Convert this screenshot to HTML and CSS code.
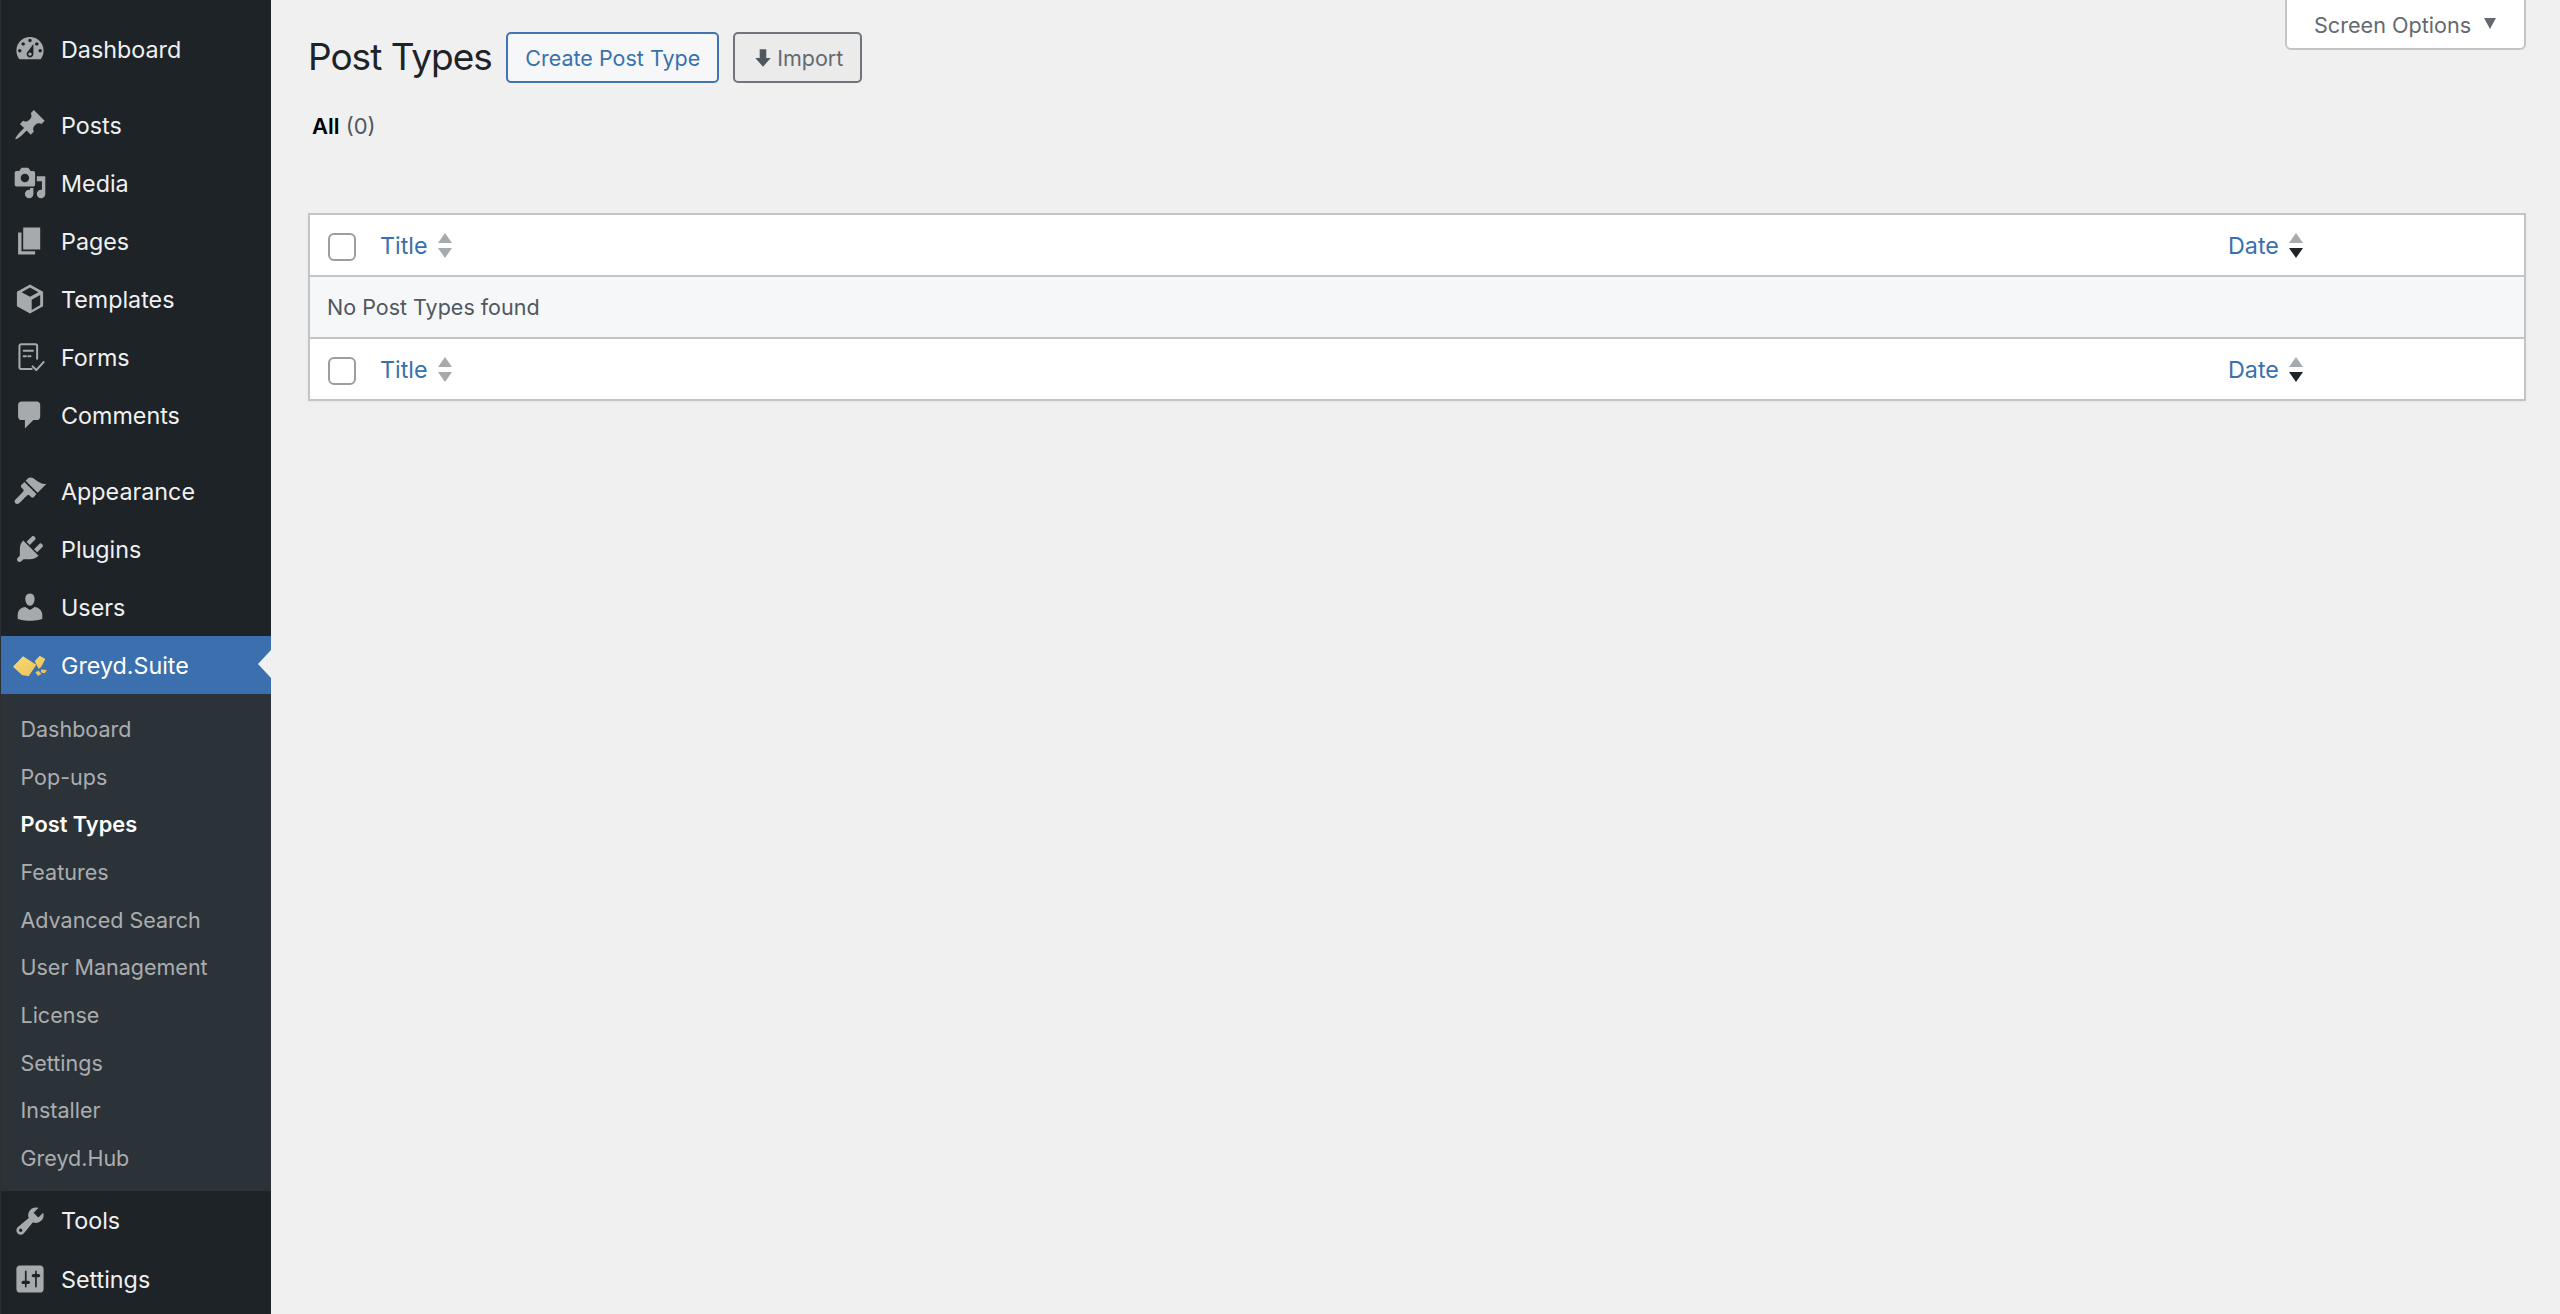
FILE: index.html
```html
<!DOCTYPE html>
<html lang="en">
<head>
<meta charset="utf-8">
<title>Post Types</title>
<link rel="stylesheet" href="styles.css">
</head>
<body>
<div class="app">
  <nav class="sidebar">
    <ul class="menu">
      <li class="item"><svg class="icon" viewBox="0 0 20 20"><path fill-rule="evenodd" d="M3.76 16h12.48c1.1-1.37 1.76-3.11 1.76-5 0-4.42-3.58-8-8-8s-8 3.58-8 8c0 1.89.66 3.63 1.76 5zM10 4c.55 0 1 .45 1 1s-.45 1-1 1-1-.45-1-1 .45-1 1-1zM6 6c.55 0 1 .45 1 1s-.45 1-1 1-1-.45-1-1 .45-1 1-1zm8 0c.55 0 1 .45 1 1s-.45 1-1 1-1-.45-1-1 .45-1 1-1zm-5.37 5.55L12 7v6c0 1.1-.9 2-2 2s-2-.9-2-2c0-.57.24-1.08.63-1.45zM4 10c.55 0 1 .45 1 1s-.45 1-1 1-1-.45-1-1 .45-1 1-1zm12 0c.55 0 1 .45 1 1s-.45 1-1 1-1-.45-1-1 .45-1 1-1zm-5 3c0-.55-.45-1-1-1s-1 .45-1 1 .45 1 1 1 1-.45 1-1z"/></svg>Dashboard</li>
      <li class="item gap"><svg class="icon" viewBox="0 0 20 20"><path d="M10.44 3.02l1.82-1.82 6.36 6.35-1.83 1.82c-1.05-.68-2.48-.57-3.41.36l-.75.75c-.92.93-1.04 2.35-.35 3.41l-1.83 1.82-2.41-2.41-2.8 2.79c-.42.42-3.38 2.71-3.8 2.29s1.86-3.39 2.28-3.81l2.79-2.79L4.1 9.36l1.83-1.82c1.05.69 2.48.57 3.4-.36l.75-.75c.93-.92 1.05-2.35.36-3.41z"/></svg>Posts</li>
      <li class="item"><svg class="icon" viewBox="0 0 20 20"><path fill-rule="evenodd" d="M13 11V4c0-.55-.45-1-1-1h-1.67L9 1H5L3.67 3H2c-.55 0-1 .45-1 1v7c0 .55.45 1 1 1h10c.55 0 1-.45 1-1zM7 4.5c1.38 0 2.5 1.12 2.5 2.5S8.38 9.5 7 9.5 4.5 8.38 4.5 7 5.62 4.5 7 4.5zM14 6h5v10.5c0 1.38-1.12 2.5-2.5 2.5S14 17.88 14 16.5s1.12-2.5 2.5-2.5c.17 0 .34.02.5.05V9h-3V6zm-4 8.05V13h2v3.5c0 1.38-1.12 2.5-2.5 2.5S7 17.88 7 16.5 8.12 14 9.5 14c.17 0 .34.02.5.05z"/></svg>Media</li>
      <li class="item"><svg class="icon" viewBox="0 0 20 20"><path d="M6 15V2h10v13H6zm-1 1h8v2H3V5h2v11z"/></svg>Pages</li>
      <li class="item"><svg class="icon" viewBox="0 0 20 20"><path fill-rule="evenodd" d="M10 1.5l7.7 4.3v8.4L10 18.5l-7.700-4.300V5.800zM10 3.300L5.100 6 10 8.700 14.900 6zM11 10.400v6l5-2.800V7.600z"/></svg>Templates</li>
      <li class="item"><svg class="icon" viewBox="0 0 20 20"><path class="line" d="M11 17H4.800a1 1 0 0 1-1-1V3.500a1 1 0 0 1 1-1h8.400a1 1 0 0 1 1 1V11M6.300 6.300h5.400M6.300 9.500h1.300M9 9.500h1.300"/><path class="line" d="M11.500 15.500l2.200 2.200 4.300-4.700"/></svg>Forms</li>
      <li class="item"><svg class="icon" viewBox="0 0 20 20"><path d="M5 2h9c1.100 0 2 .9 2 2v7c0 1.100-.9 2-2 2h-2l-5 5v-5H5c-1.100 0-2-.9-2-2V4c0-1.100.9-2 2-2z"/></svg>Comments</li>
      <li class="item gap"><svg class="icon" viewBox="0 0 20 20"><path d="M14.480 11.060L7.410 3.990l1.500-1.500c.5-.56 2.300-.47 3.510.32 1.210.8 1.430 1.280 2.910 2.100 1.180.64 2.450 1.260 4.450.85zm-.71.71L6.700 4.700 4.930 6.470c-.39.39-.39 1.020 0 1.410l1.060 1.060c.39.39.39 1.030 0 1.420-.6.6-1.100 1.300-2 2.100l-2.400 2.400c-.8.8-.8 1.800-.2 2.400s1.600.6 2.400-.2l2.400-2.400c.8-.9 1.500-1.400 2.100-2 .39-.39 1.030-.39 1.420 0l1.060 1.060c.39.39 1.020.39 1.410 0z"/></svg>Appearance</li>
      <li class="item"><svg class="icon" viewBox="0 0 20 20"><path d="M13.110 4.360L9.870 7.600 8 5.730l3.240-3.240c.35-.34 1.050-.2 1.560.32.52.51.66 1.210.31 1.550zm-8 1.770l.91-1.120 9.010 9.010-1.190.84c-.71.71-2.630 1.160-3.820 1.160H6.140L4.900 17.260c-.59.59-1.540.59-2.120 0-.59-.58-.59-1.530 0-2.120l1.240-1.240v-3.880c0-1.130.4-3.190 1.090-3.890zm7.260 3.970l3.240-3.240c.34-.35 1.040-.21 1.550.31.52.51.66 1.210.31 1.550l-3.240 3.250z"/></svg>Plugins</li>
      <li class="item"><svg class="icon" viewBox="0 0 20 20"><path d="M10 9.250c-2.270 0-2.730-3.440-2.730-3.440C7 4.020 7.820 2 9.970 2c2.160 0 2.980 2.020 2.710 3.810 0 0-.41 3.440-2.680 3.440zm0 2.570L12.720 10c2.390 0 4.520 2.330 4.520 4.530v2.490s-3.650 1.130-7.240 1.130c-3.650 0-7.240-1.130-7.240-1.130v-2.490c0-2.250 1.940-4.480 4.470-4.480z"/></svg>Users</li>
      <li class="item active"><svg class="icon" viewBox="0 0 34 34"><defs><linearGradient id="gold" x1="0" y1="0" x2="1" y2="1"><stop offset="0" stop-color="#f7dc76"/><stop offset="1" stop-color="#eebd55"/></linearGradient></defs><path fill="url(#gold)" d="M0 18.700L10 8.300 23.300 16.700 15.700 28.300 9 27zM21.700 13.300L26.700 7.700 32.300 11 28.300 18.700 25.700 21zM28 21.500l6 .5-2.300 3.300-3.700-.8zM22.300 24.300l3.400-1.600 2.600 3.300-3.300 2z"/></svg>Greyd.Suite</li>
    </ul>
    <ul class="submenu">
      <li class="subitem">Dashboard</li>
      <li class="subitem">Pop-ups</li>
      <li class="subitem current">Post Types</li>
      <li class="subitem">Features</li>
      <li class="subitem">Advanced Search</li>
      <li class="subitem">User Management</li>
      <li class="subitem">License</li>
      <li class="subitem">Settings</li>
      <li class="subitem">Installer</li>
      <li class="subitem">Greyd.Hub</li>
    </ul>
    <ul class="menu">
      <li class="item"><svg class="icon" viewBox="0 0 20 20"><path fill-rule="evenodd" d="M16.680 9.770c-1.340 1.340-3.300 1.670-4.950.99l-5.410 6.520c-.99.99-2.590.99-3.580 0s-.99-2.590 0-3.570l6.520-5.420c-.68-1.650-.35-3.610.99-4.950 1.280-1.280 3.120-1.620 4.720-1.060l-2.890 2.890 2.820 2.820 2.860-2.870c.53 1.580.18 3.390-1.080 4.670zM3.810 16.210c.4.39 1.040.39 1.430 0 .4-.4.4-1.040 0-1.430-.39-.4-1.030-.4-1.430 0-.39.39-.39 1.030 0 1.430z"/></svg>Tools</li>
      <li class="item"><svg class="icon" viewBox="0 0 20 20"><path fill-rule="evenodd" d="M18 16V4c0-1.100-.9-2-2-2H4c-1.100 0-2 .9-2 2v12c0 1.100.9 2 2 2h12c1.100 0 2-.9 2-2zM8 11h1c.55 0 1 .45 1 1s-.45 1-1 1H8v1.500c0 .28-.22.5-.5.5s-.5-.22-.5-.5V13H6c-.55 0-1-.45-1-1s.45-1 1-1h1V5.500c0-.28.22-.5.5-.5s.5.22.5.5V11zm5-2h-1c-.55 0-1-.45-1-1s.45-1 1-1h1V5.500c0-.28.22-.5.5-.5s.5.22.5.5V7h1c.55 0 1 .45 1 1s-.45 1-1 1h-1v5.500c0 .28-.22.5-.5.5s-.5-.22-.5-.5V9z"/></svg>Settings</li>
    </ul>
  </nav>
  <main class="content">
    <header class="page-head">
      <h1 class="title">Post Types</h1>
      <a class="btn btn-primary">Create Post Type</a>
      <a class="btn btn-muted"><svg class="btn-icon" viewBox="0 0 20 20"><path d="M7 2h6v8h4l-7 8-7-8h4z"/></svg>Import</a>
      <button class="screen-options">Screen Options<span class="caret"></span></button>
    </header>
    <p class="views"><strong>All</strong> <span>(0)</span></p>
    <table class="list">
      <thead>
        <tr>
          <th class="col-check"><span class="check"></span></th>
          <th class="col-title"><a class="sort">Title<span class="arrows"><i class="up"></i><i class="down"></i></span></a></th>
          <th class="col-date"><a class="sort">Date<span class="arrows"><i class="up"></i><i class="down dark"></i></span></a></th>
        </tr>
      </thead>
      <tbody>
        <tr><td class="empty" colspan="3">No Post Types found</td></tr>
      </tbody>
      <tfoot>
        <tr>
          <th class="col-check"><span class="check"></span></th>
          <th class="col-title"><a class="sort">Title<span class="arrows"><i class="up"></i><i class="down"></i></span></a></th>
          <th class="col-date"><a class="sort">Date<span class="arrows"><i class="up"></i><i class="down dark"></i></span></a></th>
        </tr>
      </tfoot>
    </table>
  </main>
</div>
</body>
</html>
```
FILE: styles.css
```css
* { box-sizing: border-box; }
html, body { margin: 0; height: 100%; overflow: hidden; }
body { font-family: Inter, "Liberation Sans", sans-serif; background: #f0f0f1; color: #3c434a; }
ul { list-style: none; margin: 0; padding: 0; }
.app { display: flex; height: 1314px; }

.sidebar { width: 271px; flex: none; background: #1d2327; padding-top: 20px; border-left: 1px solid #2a2f34; }
.item { position: relative; display: flex; align-items: center; gap: 14px; height: 58px; padding-left: 12px; font-size: 23.300px; color: #f0f0f1; white-space: nowrap; }
.item.gap { margin-top: 18px; }
.icon { width: 34px; height: 34px; flex: none; fill: #a7aaad; }
.line { fill: none; stroke: #a7aaad; stroke-width: 1.200; stroke-linecap: round; stroke-linejoin: round; }
.active { background: #3b6fad; color: #fff; margin-top: 0; }
.active::after { content: ""; position: absolute; right: 0; top: 14px; border: 14px solid transparent; border-left: 0; border-right: 13px solid #f0f0f1; }
.submenu { background: #2c3338; padding: 11px 0 9.500px; }
.subitem { display: flex; align-items: center; height: 47.700px; padding-left: 19.500px; font-size: 21.500px; color: #abadb0; }
.subitem.current { color: #fff; font-weight: 600; font-size: 21.800px; }
.submenu + .menu .item { height: 58.500px; }

.content { flex: 1; min-width: 0; padding: 0 34px 0 37px; }
.page-head { display: flex; align-items: flex-start; height: 83px; }
.title { margin: 35px 14.500px 0 0; font-size: 37px; line-height: 44px; font-weight: 400; letter-spacing: -1px; color: #1d2327; }
.btn { display: flex; align-items: center; height: 51px; margin-top: 32px; padding: 0 17px; border-radius: 5px; border: 2px solid; font-size: 21.500px; white-space: nowrap; }
.btn-primary { color: #3871ad; border-color: #4075b2; background: #f6f7f9; margin-right: 14px; }
.btn-muted { color: #646970; border-color: #70757b; background: #ebebec; }
.btn-icon { width: 22px; height: 22px; fill: #50575e; margin-right: 3px; }
.screen-options { display: flex; align-items: center; margin-left: auto; height: 50px; width: 241px; padding: 1px 0 0 27px; background: #fff; border: 2px solid #c3c4c7; border-top: 0; border-radius: 0 0 6px 6px; font: inherit; font-size: 21.600px; color: #646970; }
.caret { margin-left: 13px; margin-bottom: 3px; border-style: solid; border-width: 11px 6.500px 0; border-color: #646970 transparent transparent; }

.views { margin: 27px 0 0 4px; height: 32px; font-size: 22px; line-height: 32px; color: #50575e; }
.views strong { font-weight: 600; color: #000; }

.list { width: 100%; margin-top: 71px; border-collapse: collapse; border: 2px solid #c3c4c7; background: #fff; table-layout: fixed; font-size: 21.500px; box-shadow: 0 1px 2px rgba(0,0,0,.05); }
.list th { height: 62px; padding: 0; text-align: left; font-weight: 400; }
.col-check { width: 71px; }
.col-check { padding-left: 18px !important; }
.col-date { width: 297px; }
.check { display: block; width: 28px; height: 28px; margin: 4px 0 0 0; border: 2px solid #9a9da1; border-radius: 6px; background: #fff; }
.sort { display: inline-flex; align-items: center; color: #3871ad; font-size: 23.300px; }
.arrows { display: flex; flex-direction: column; gap: 5px; margin-left: 10px; }
.up, .down { display: block; border-style: solid; border-color: transparent; }
.up { border-width: 0 7px 10px; border-bottom-color: #a7aaad; }
.down { border-width: 10px 7px 0; border-top-color: #a7aaad; }
.down.dark { border-top-color: #1d2327; }
.empty { height: 62px; padding: 0 0 0 17px; background: #f6f7f9; color: #50575e; border-top: 2px solid #c3c4c7; border-bottom: 2px solid #c3c4c7; }
```
